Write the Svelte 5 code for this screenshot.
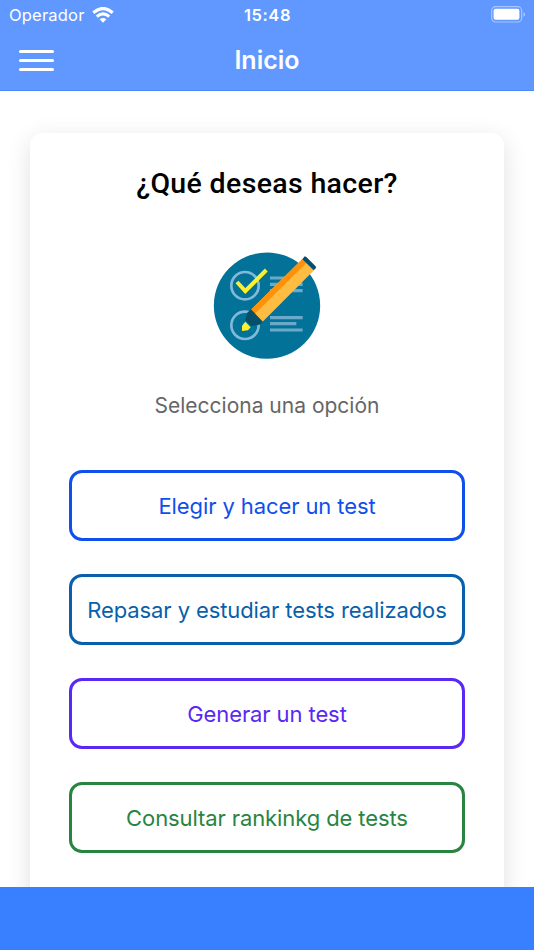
<script lang="ts">
  const options = [
    { id: 'choose', label: 'Elegir y hacer un test' },
    { id: 'review', label: 'Repasar y estudiar tests realizados' },
    { id: 'generate', label: 'Generar un test' },
    { id: 'ranking', label: 'Consultar rankinkg de tests' }
  ];
</script>

<div class="page">
  <header>
    <div class="status">
      <div class="carrier">
        <span>Operador</span>
        <svg width="22" height="16" viewBox="0 0 22 16">
          <g fill="none" stroke="#fff" stroke-width="3.2">
            <path d="M1.3 5.8 Q11 -2.8 20.7 5.8" />
            <path d="M4.8 9.6 Q11 4.2 17.2 9.6" />
          </g>
          <path d="M7.6 12.3 Q11 9.7 14.4 12.3 L11 15.7 Z" fill="#fff" />
        </svg>
      </div>
      <span class="time">15:48</span>
      <svg class="battery" width="35" height="17" viewBox="0 0 35 17">
        <rect x="0.7" y="0.7" width="30" height="15.3" rx="4" fill="none" stroke="#fff" stroke-opacity="0.45" stroke-width="1.2" />
        <rect x="2.6" y="2.8" width="25.8" height="11" rx="2" fill="#fff" />
        <path d="M32.5 6 Q34 6.6 34 8.4 Q34 10.2 32.5 10.8 Z" fill="#fff" fill-opacity="0.5" />
      </svg>
    </div>
    <div class="toolbar">
      <button class="menu" aria-label="Menu">
        <span></span>
        <span></span>
        <span></span>
      </button>
      <h1>Inicio</h1>
    </div>
  </header>

  <main>
    <section class="card">
      <h2>¿Qué deseas hacer?</h2>
      <svg class="logo" width="108" height="108" viewBox="48 36 324 324">
        <circle cx="210" cy="197" r="159.5" fill="#037299" />
        <g fill="none" stroke="#82b9d8" stroke-width="8">
          <circle cx="144" cy="137" r="41" />
          <circle cx="144" cy="256" r="41" />
        </g>
        <path d="M219 114H317M219 133H317M219 152H317M219 233H317M219 251H298M219 270H317" stroke="#6aa9c9" stroke-width="9.5" />
        <path d="M120 126 L145 153 L208 90" fill="none" stroke="#ffee2b" stroke-width="12" />
        <path d="M316 57 L351 91 L197 245 L162 209 Z" fill="#ffbc42" />
        <path d="M316 57 L328 69 L174 221 L162 209 Z" fill="#ff9109" />
        <path d="M316 58 L323 49 L328 51 L356 79 L357 84 L350 91 Z" fill="#064f6b" />
        <path d="M162 208 L197 245 L187 254 L162 258 L145 241 L150 219 Z" fill="#064f6b" />
        <path d="M145 245 L161 262 L153 271 L135 273 L135 257 Z" fill="#ffee2b" />
      </svg>
      <p>Selecciona una opción</p>
      <div class="options">
        {#each options as option}
          <button class={option.id}>{option.label}</button>
        {/each}
      </div>
    </section>
  </main>

  <footer></footer>
</div>

<style>
  :global(body) {
    margin: 0;
    background: #fff;
  }
  .page {
    display: flex;
    flex-direction: column;
    height: 950px;
    overflow: hidden;
    font-family: Inter, "Liberation Sans", sans-serif;
  }
  header {
    box-sizing: border-box;
    flex: none;
    height: 91px;
    background: #6098ff;
    border-bottom: 1px solid #4789f8;
    color: #fff;
  }
  .status {
    display: grid;
    grid-template-columns: 1fr auto 1fr;
    align-items: center;
    height: 29px;
    padding: 0 8px 0 9px;
    font-size: 16.5px;
  }
  .carrier {
    display: flex;
    align-items: center;
    gap: 7px;
    letter-spacing: 0.2px;
  }
  .time {
    font-weight: 600;
    letter-spacing: 0.6px;
  }
  .battery {
    justify-self: end;
  }
  .toolbar {
    display: grid;
    grid-template-columns: 1fr auto 1fr;
    align-items: center;
    height: 62px;
    padding: 0 19px;
  }
  .menu {
    display: flex;
    flex-direction: column;
    gap: 6px;
    width: 35px;
    padding: 0;
    border: none;
    background: none;
  }
  .menu span {
    height: 3px;
    border-radius: 2px;
    background: #fff;
  }
  h1 {
    margin: 0;
    font-size: 25px;
    font-weight: 600;
  }
  main {
    flex: 1;
    min-height: 0;
    overflow: hidden;
    padding: 42px 30px 0;
  }
  .card {
    box-sizing: border-box;
    display: flex;
    flex-direction: column;
    align-items: center;
    height: 800px;
    padding: 34px 39px;
    border-radius: 12px;
    background: #fff;
    box-shadow: 0 6px 24px rgba(0, 0, 0, 0.12);
  }
  h2 {
    margin: 0;
    font-family: Roboto, sans-serif;
    font-size: 28.5px;
    font-weight: 500;
    line-height: 34px;
    letter-spacing: 0.35px;
    color: #000;
  }
  .logo {
    margin-top: 51px;
  }
  p {
    margin: 33px 0 0;
    font-size: 21px;
    line-height: 26px;
    color: #666;
  }
  .options {
    display: flex;
    flex-direction: column;
    gap: 33px;
    width: 100%;
    margin-top: 51px;
  }
  .options button {
    box-sizing: border-box;
    height: 71px;
    padding: 0;
    border: 3px solid currentColor;
    border-radius: 13px;
    background: #fff;
    font-family: inherit;
    font-size: 22px;
    letter-spacing: -0.1px;
    white-space: nowrap;
  }
  .choose {
    color: #0f4fec;
  }
  .review {
    color: #085fac;
  }
  .generate {
    color: #5928f2;
  }
  .ranking {
    color: #288441;
  }
  footer {
    flex: none;
    height: 63px;
    background: #3880ff;
  }
</style>
